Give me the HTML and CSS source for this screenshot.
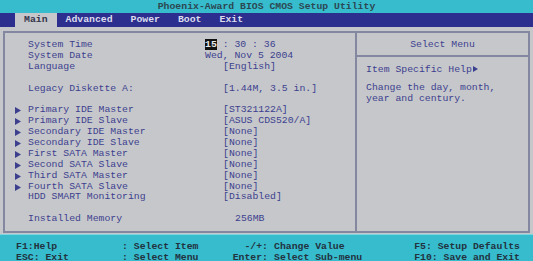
FILE: index.html
```html
<!DOCTYPE html>
<html lang="en">
<head>
    <meta charset="UTF-8">
    <title>Phoenix-Award BIOS CMOS Setup Utility</title>
    <link rel="stylesheet" href="styles.css">
</head>
<body>
    <div class="title">Phoenix-Award BIOS CMOS Setup Utility</div>
    <div class="menu">
        <span class="menu-item active">Main</span>
        <span class="menu-item">Advanced</span>
        <span class="menu-item">Power</span>
        <span class="menu-item">Boot</span>
        <span class="menu-item">Exit</span>
    </div>

    <div class="panel">
        <div class="frame">
            <div class="settings">
                <div class="row"><span class="arrow"></span><span class="label">System Time</span><span class="value"><span class="cursor">15</span> : 30 : 36</span></div>
                <div class="row"><span class="arrow"></span><span class="label">System Date</span><span class="value">Wed, Nov 5 2004</span></div>
                <div class="row"><span class="arrow"></span><span class="label">Language</span><span class="value opt">[English]</span></div>
                <div class="row"></div>
                <div class="row"><span class="arrow"></span><span class="label">Legacy Diskette A:</span><span class="value opt">[1.44M, 3.5 in.]</span></div>
                <div class="row"></div>
                <div class="row"><span class="arrow"><svg width="6" height="7" viewBox="0 0 6 7"><polygon points="0,0 6,3.5 0,7"/></svg></span><span class="label">Primary IDE Master</span><span class="value opt">[ST321122A]</span></div>
                <div class="row"><span class="arrow"><svg width="6" height="7" viewBox="0 0 6 7"><polygon points="0,0 6,3.5 0,7"/></svg></span><span class="label">Primary IDE Slave</span><span class="value opt">[ASUS CDS520/A]</span></div>
                <div class="row"><span class="arrow"><svg width="6" height="7" viewBox="0 0 6 7"><polygon points="0,0 6,3.5 0,7"/></svg></span><span class="label">Secondary IDE Master</span><span class="value opt">[None]</span></div>
                <div class="row"><span class="arrow"><svg width="6" height="7" viewBox="0 0 6 7"><polygon points="0,0 6,3.5 0,7"/></svg></span><span class="label">Secondary IDE Slave</span><span class="value opt">[None]</span></div>
                <div class="row"><span class="arrow"><svg width="6" height="7" viewBox="0 0 6 7"><polygon points="0,0 6,3.5 0,7"/></svg></span><span class="label">First SATA Master</span><span class="value opt">[None]</span></div>
                <div class="row"><span class="arrow"><svg width="6" height="7" viewBox="0 0 6 7"><polygon points="0,0 6,3.5 0,7"/></svg></span><span class="label">Second SATA Slave</span><span class="value opt">[None]</span></div>
                <div class="row"><span class="arrow"><svg width="6" height="7" viewBox="0 0 6 7"><polygon points="0,0 6,3.5 0,7"/></svg></span><span class="label">Third SATA Master</span><span class="value opt">[None]</span></div>
                <div class="row"><span class="arrow"><svg width="6" height="7" viewBox="0 0 6 7"><polygon points="0,0 6,3.5 0,7"/></svg></span><span class="label">Fourth SATA Slave</span><span class="value opt">[None]</span></div>
                <div class="row"><span class="arrow"></span><span class="label">HDD SMART Monitoring</span><span class="value opt">[Disabled]</span></div>
                <div class="row"></div>
                <div class="row"><span class="arrow"></span><span class="label">Installed Memory</span><span class="value mem">256MB</span></div>
            </div>
            <div class="help">
                <div class="help-head">Select Menu</div>
                <div class="help-body">
                    <div>Item Specific Help<svg class="help-arrow" width="5" height="6" viewBox="0 0 5 6"><polygon points="0,0 5,3 0,6"/></svg></div>
                    <div class="help-text">Change the day, month,<br>year and century.</div>
                </div>
            </div>
        </div>
    </div>

    <div class="footer">
        <span class="f-key">F1:Help</span><span class="f-act">: Select Item</span><span class="f-key2">-/+:</span><span class="f-act2">Change Value</span><span class="f-right">F5: Setup Defaults</span>
        <span class="f-key">ESC: Exit</span><span class="f-act">: Select Menu</span><span class="f-key2">Enter:</span><span class="f-act2">Select Sub-menu</span><span class="f-right">F10: Save and Exit</span>
    </div>
</body>
</html>
```

FILE: styles.css
```css
body {
    margin: 0;
    width: 533px;
    height: 261px;
    overflow: hidden;
    background-color: #c6c7cb;
    font-family: "Liberation Mono", "Courier New", monospace;
    font-size: 9.8px;
    color: #3c3f8e;
}

.title {
    height: 13px;
    line-height: 14px;
    background-color: #36bccd;
    color: #2d4752;
    font-weight: bold;
    text-align: center;
}

.menu {
    display: flex;
    height: 14px;
    line-height: 14px;
    padding-left: 15px;
    background-color: #2c2f8d;
    color: #dcdcee;
    font-weight: bold;
}
.menu-item {
    padding: 0 9px;
}
.menu-item.active {
    background-color: #c6c7cb;
    color: #34364a;
}

.panel {
    height: 207px;
    padding: 4px 3px 0 3px;
    box-sizing: border-box;
}
.frame {
    display: grid;
    grid-template-columns: 352px 1fr;
    height: 202px;
    border: 2px solid #83879f;
    box-sizing: border-box;
}

.settings {
    padding: 7px 0 0 10px;
    border-right: 2px solid #83879f;
}
.row {
    display: flex;
    height: 10.9px;
    line-height: 10.9px;
    white-space: pre;
}
.arrow {
    width: 13px;
    display: flex;
    align-items: center;
}
.arrow svg, .help-arrow {
    fill: #3c3f8e;
}
.label {
    width: 177px;
}
.value.opt {
    padding-left: 18px;
}
.value.mem {
    padding-left: 30px;
}
.cursor {
    background-color: #111;
    color: #e8e8e8;
    font-weight: bold;
}

.help-head {
    height: 22px;
    line-height: 24px;
    text-align: center;
    border-bottom: 2px solid #83879f;
}
.help-body {
    padding: 8px 0 0 9px;
    line-height: 10.9px;
}
.help-arrow {
    margin-left: 1px;
}
.help-text {
    margin-top: 7px;
}

.footer {
    display: grid;
    grid-template-columns: 106px 90px 62px 136px 110px;
    height: 27px;
    padding: 7px 0 0 16px;
    box-sizing: border-box;
    background-color: #36bccd;
    border-top: 1px solid #7fd6e0;
    color: #22323f;
    font-weight: bold;
    line-height: 10.9px;
    white-space: pre;
}
.f-key2 {
    text-align: right;
    padding-right: 6px;
}
.f-right {
    text-align: right;
}
```
